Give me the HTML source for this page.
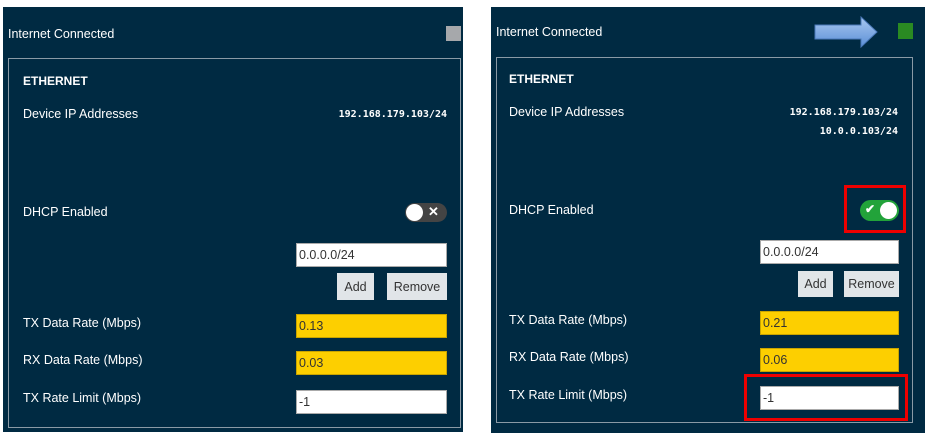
<!DOCTYPE html>
<html><head><meta charset="utf-8"><style>
*{margin:0;padding:0;box-sizing:border-box}
body{width:930px;height:438px;background:#fff;position:relative;font-family:"Liberation Sans",sans-serif;color:#fff;overflow:hidden}
.p{position:absolute;background:#002a42}
.b{position:absolute;border:1px solid #8a9aa6}
.t{position:absolute;font-size:12.5px;line-height:14px;white-space:nowrap}
.h{font-weight:bold;font-size:12px}
.m{position:absolute;font-family:"DejaVu Sans Mono",monospace;font-size:10px;font-weight:bold;line-height:12px;text-align:right;white-space:nowrap}
.i{position:absolute;background:#fff;border:1px solid #aaa;color:#333;font-size:12.5px;padding-left:2px;display:flex;align-items:center}
.y{background:#fdcf00;border-color:#c9a400}
.btn{position:absolute;background:#e1e5e8;color:#333;font-size:12.5px;display:flex;align-items:center;justify-content:center}
.r{position:absolute;border:3px solid #ee0000}
</style></head><body>
<!-- left -->
<div class="p" style="left:3px;top:7px;width:460px;height:425px"></div>
<div class="t" style="left:8px;top:27px">Internet Connected</div>
<div style="position:absolute;left:446px;top:26px;width:15px;height:15px;background:#a6a8ab"></div>
<div class="b" style="left:8px;top:58px;width:453px;height:370px"></div>
<div class="t h" style="left:23px;top:74px">ETHERNET</div>
<div class="t" style="left:23px;top:107px">Device IP Addresses</div>
<div class="m" style="right:483px;top:109px">192.168.179.103/24</div>
<div class="t" style="left:23px;top:205px">DHCP Enabled</div>
<div style="position:absolute;left:405px;top:203px;width:42px;height:19px;border-radius:10px;background:#444"></div>
<div style="position:absolute;left:406px;top:204px;width:17px;height:17px;border-radius:50%;background:#fff"></div>
<div style="position:absolute;left:428px;top:204px;font-size:13px;font-weight:bold;color:#fff">✕</div>
<div class="i" style="left:296px;top:243px;width:151px;height:24px">0.0.0.0/24</div>
<div class="btn" style="left:337px;top:273px;width:37px;height:27px">Add</div>
<div class="btn" style="left:387px;top:273px;width:60px;height:27px">Remove</div>
<div class="t" style="left:23px;top:316px">TX Data Rate (Mbps)</div>
<div class="i y" style="left:296px;top:314px;width:151px;height:24px">0.13</div>
<div class="t" style="left:23px;top:353px">RX Data Rate (Mbps)</div>
<div class="i y" style="left:296px;top:351px;width:151px;height:24px">0.03</div>
<div class="t" style="left:23px;top:391px">TX Rate Limit (Mbps)</div>
<div class="i" style="left:296px;top:390px;width:151px;height:24px">-1</div>
<!-- right -->
<div class="p" style="left:491px;top:7px;width:434px;height:426px"></div>
<div class="t" style="left:496px;top:25px">Internet Connected</div>
<svg style="position:absolute;left:814px;top:16px" width="66" height="32"><defs><linearGradient id="g" x1="0" y1="0" x2="0" y2="1"><stop offset="0" stop-color="#a9c8f0"/><stop offset="1" stop-color="#5b8fd6"/></linearGradient></defs><path d="M1 9 H47 V1 L63 16 L47 31 V23 H1 Z" fill="url(#g)" stroke="#4a78b8"/></svg>
<div style="position:absolute;left:898px;top:23px;width:15px;height:16px;background:#2a8a22"></div>
<div class="b" style="left:496px;top:57px;width:417px;height:366px"></div>
<div class="t h" style="left:509px;top:72px">ETHERNET</div>
<div class="t" style="left:509px;top:105px">Device IP Addresses</div>
<div class="m" style="right:32px;top:107px">192.168.179.103/24</div>
<div class="m" style="right:32px;top:126px">10.0.0.103/24</div>
<div class="r" style="left:844px;top:185px;width:62px;height:48px"></div>
<div class="t" style="left:509px;top:203px">DHCP Enabled</div>
<div style="position:absolute;left:860px;top:200px;width:39px;height:21px;border-radius:11px;background:#22a33a"></div>
<div style="position:absolute;left:880px;top:202px;width:17px;height:17px;border-radius:50%;background:#fff"></div>
<div style="position:absolute;left:865px;top:202px;font-size:12px;font-weight:bold;color:#fff">✔</div>
<div class="i" style="left:760px;top:240px;width:139px;height:24px">0.0.0.0/24</div>
<div class="btn" style="left:798px;top:271px;width:35px;height:26px">Add</div>
<div class="btn" style="left:844px;top:271px;width:55px;height:26px">Remove</div>
<div class="t" style="left:509px;top:313px">TX Data Rate (Mbps)</div>
<div class="i y" style="left:760px;top:311px;width:139px;height:24px">0.21</div>
<div class="t" style="left:509px;top:350px">RX Data Rate (Mbps)</div>
<div class="i y" style="left:760px;top:348px;width:139px;height:24px">0.06</div>
<div class="t" style="left:509px;top:388px">TX Rate Limit (Mbps)</div>
<div class="r" style="left:744px;top:374px;width:164px;height:47px"></div>
<div class="i" style="left:760px;top:386px;width:139px;height:24px">-1</div>
</body></html>
